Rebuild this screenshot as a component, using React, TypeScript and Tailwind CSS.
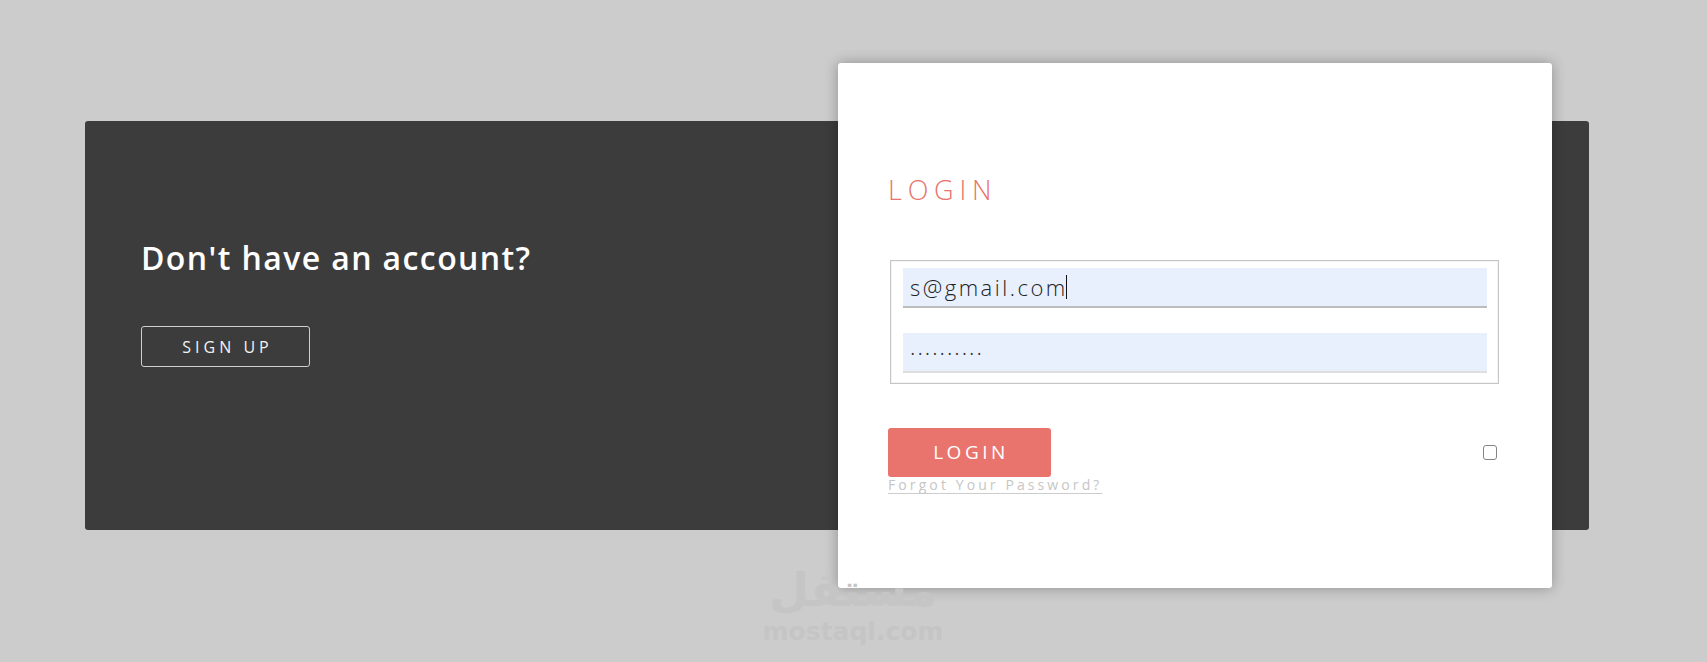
import React from "react";

const font = { fontFamily: '"Open Sans", "Noto Sans", sans-serif' };

export default function App() {
  return (
    <div
      className="relative h-[662px] w-full overflow-hidden bg-[#cccccc] pl-[85px] pt-[121px]"
      style={font}
    >
      <div className="flex h-[409px] w-[1504px] items-center rounded-[3px] bg-[#3c3c3c]">
        <div className="h-full w-[753px] shrink-0 self-start pl-[56px] pt-[117px]">
          <h2 className="text-[32px] font-semibold leading-[40px] tracking-[1.4px] text-white">
            Don&apos;t have an account?
          </h2>
          <button className="mt-[48px] flex h-[41px] w-[169px] items-center justify-center rounded-[3px] border border-[#cfcfcf] pl-[4px] text-[16px] font-normal tracking-[4px] text-[#f2f2f2]">
            SIGN UP
          </button>
        </div>

        <div className="flex h-[525px] w-[714px] shrink-0 flex-col rounded-[3px] bg-white pl-[50px] pt-[111px] shadow-[0_0_14px_rgba(0,0,0,0.3)]">
          <h1 className="text-[27px] font-light leading-[32px] tracking-[5.8px] text-[#e8736c]">
            LOGIN
          </h1>

          <fieldset className="ml-[2px] mt-[54px] flex w-[609px] flex-col gap-[25px] border border-[#c6c6c6] pb-[10px] pl-[12px] pr-[11px] pt-[7px] shadow-[inset_0_0_0_1px_#f4f4f4]">
            <div className="flex h-[40px] w-[584px] items-center border-b-2 border-[#bdbdbd] bg-[#e8f0fe] pl-[7px] text-[22px] font-light tracking-[2.5px] text-[#222]">
              <span>s@gmail.com</span>
              <span className="ml-[-2px] h-[24px] w-[1px] bg-[#111]" />
            </div>
            <div className="flex h-[40px] w-[584px] items-center border-b-2 border-[#dedede] bg-[#e8f0fe] pl-[8px] pt-[4px] text-[9px] tracking-[4px] text-[#333]">
              ••••••••••
            </div>
          </fieldset>

          <div className="mt-[44px] flex w-[611px] items-center justify-between">
            <button className="flex h-[49px] w-[163px] items-center justify-center rounded-[3px] bg-[#e9736d] pl-[3px] text-[19px] font-normal tracking-[3.5px] text-white">
              LOGIN
            </button>
            <span className="mr-[2px] h-[15px] w-[14px] rounded-[3px] border-[1.5px] border-[#858585] bg-white" />
          </div>
          <a
            href="#"
            className="mt-[-1px] w-fit text-[14px] leading-[18px] tracking-[3.1px] text-[#c6c6c6] underline decoration-[#cdcdcd] underline-offset-[3px]"
          >
            Forgot Your Password?
          </a>
        </div>
      </div>

      <div className="pointer-events-none absolute left-[767px] top-[562px] flex w-[172px] flex-col items-center">
        <span
          className="text-[46px] font-bold leading-[56px] text-[#c5c5c5]"
          style={{ fontFamily: '"DejaVu Sans", sans-serif' }}
        >
          مستقل
        </span>
        <span
          className="text-[25px] font-bold leading-[28px] text-[#c5c5c5]"
          style={{ fontFamily: '"DejaVu Sans", sans-serif' }}
        >
          mostaql.com
        </span>
      </div>
    </div>
  );
}
